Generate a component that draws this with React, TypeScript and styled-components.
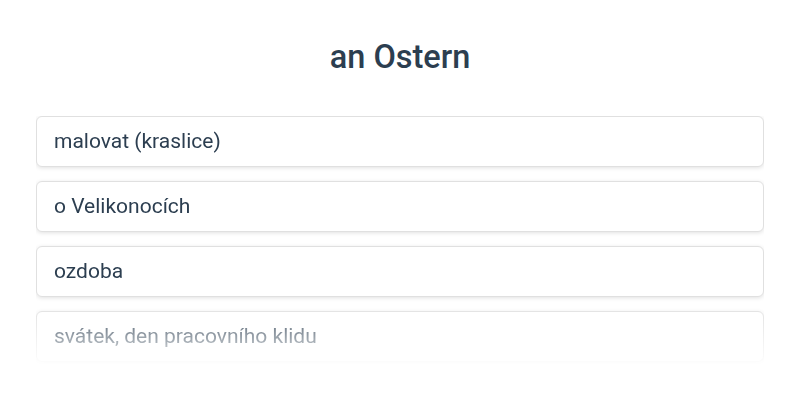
import React from 'react';
import styled, {createGlobalStyle} from "styled-components";

const GlobalStyle = createGlobalStyle`
  html, body {
    margin: 0;
    padding: 0;
    background: #ffffff;
    font-family: Roboto, "Noto Sans", sans-serif;
  }
`

const items = [
    "malovat (kraslice)",
    "o Velikonocích",
    "ozdoba",
    "svátek, den pracovního klidu",
];

export default function App() {
    return (
        <>
            <GlobalStyle/>
            <StyledPage>
                <Title>an Ostern</Title>
                <List>
                    {items.map((item) => (
                        <Card key={item}>{item}</Card>
                    ))}
                </List>
            </StyledPage>
        </>
    );
}

const StyledPage = styled.main`
  width: 800px;
  height: 400px;
  box-sizing: border-box;
  padding: 38px 36px 0;
  display: flex;
  flex-direction: column;
  overflow: hidden;
`

const Title = styled.h1`
  margin: 0;
  font-size: 32.5px;
  line-height: 38px;
  font-weight: 500;
  color: #2c3e50;
  text-align: center;
`

const List = styled.div`
  margin-top: 40px;
  display: flex;
  flex-direction: column;
  gap: 14px;
  padding-bottom: 6px;
  -webkit-mask-image: linear-gradient(to bottom, #000 0, #000 calc(100% - 64px), transparent 100%);
  mask-image: linear-gradient(to bottom, #000 0, #000 calc(100% - 64px), transparent 100%);
`

const Card = styled.div`
  box-sizing: border-box;
  height: 51px;
  padding: 11px 17px;
  border: 1px solid #e0e0e0;
  border-radius: 6px;
  background: #ffffff;
  box-shadow: 0 1px 4px rgba(0, 0, 0, 0.12);
  font-size: 21px;
  line-height: 27px;
  color: #2c3e50;
`
